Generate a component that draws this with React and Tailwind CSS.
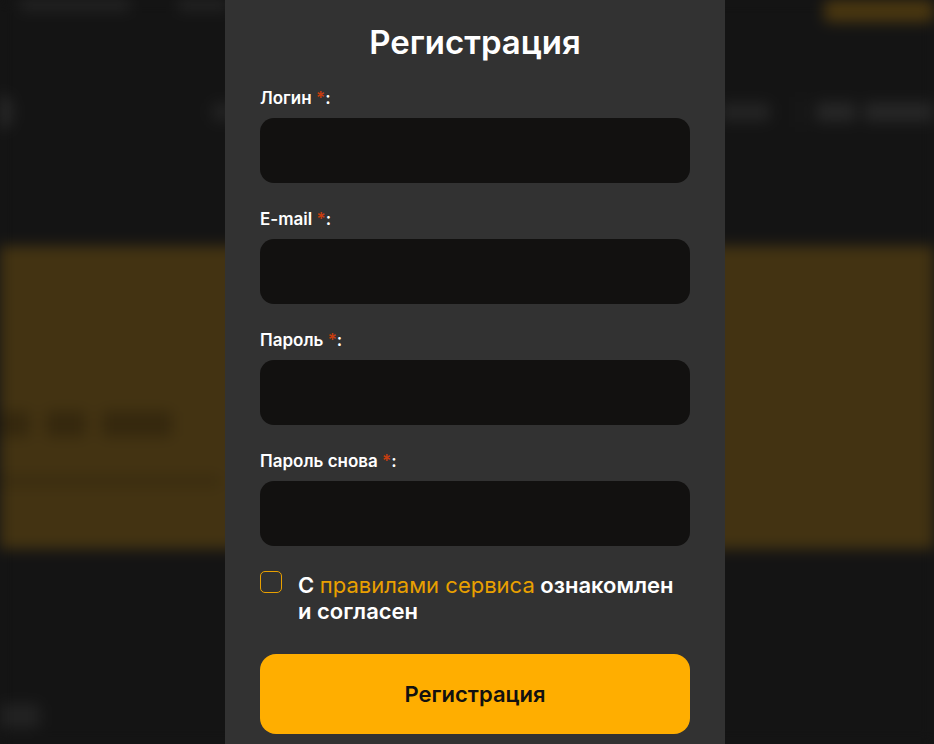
import { useState } from 'react';

const fields = [
  { id: 'login', label: 'Логин', type: 'text' },
  { id: 'email', label: 'E-mail', type: 'email' },
  { id: 'password', label: 'Пароль', type: 'password' },
  { id: 'password2', label: 'Пароль снова', type: 'password' },
];

// Page behind the modal, blurred
const BackgroundPage = () => (
  <div className="h-[744px] overflow-hidden bg-[#141414] blur-[7px]">
    {/* Top bar */}
    <div className="flex h-[22px] items-start gap-12 pl-5">
      <div className="mt-[-4px] h-[14px] w-[110px] rounded bg-[#262626]" />
      <div className="mt-[-4px] h-[14px] w-[50px] rounded bg-[#262626]" />
      <div className="ml-auto h-[22px] w-[110px] rounded-md bg-[#4a3710]" />
    </div>

    {/* Header nav */}
    <div className="mt-[70px] flex h-[40px] items-center">
      <div className="ml-[-14px] h-[36px] w-[26px] rounded-full bg-[#2a2a2a]" />
      <div className="ml-[200px] h-[18px] w-[40px] rounded bg-[#222]" />
      <div className="ml-auto h-[18px] w-[50px] rounded bg-[#242424]" />
      <div className="ml-[30px] h-[30px] w-[2px] bg-[#262626]" />
      <div className="ml-[14px] h-[20px] w-[40px] rounded bg-[#262626]" />
      <div className="ml-[8px] h-[20px] w-[70px] rounded bg-[#262626]" />
    </div>

    {/* Yellow banner */}
    <div className="mt-[114px] h-[303px] bg-[#433312] pt-[165px]">
      <div className="flex gap-4">
        <div className="h-[26px] w-[30px] rounded bg-[#35280e]" />
        <div className="h-[26px] w-[40px] rounded bg-[#35280e]" />
        <div className="h-[26px] w-[70px] rounded bg-[#35280e]" />
      </div>
      <div className="mt-[38px] h-[12px] w-[220px] rounded bg-[#3b2d10]" />
    </div>

    <div className="mt-[155px] h-[24px] w-[40px] rounded bg-[#222]" />
  </div>
);

const Field = ({ field, value, onChange }) => (
  <div className="flex flex-col">
    <label
      htmlFor={field.id}
      className="text-[17px] font-semibold leading-[20px] text-white"
    >
      {field.label} <span className="text-[#c63d0f]">*</span>:
    </label>
    <input
      id={field.id}
      type={field.type}
      value={value}
      onChange={e => onChange(field.id, e.target.value)}
      className="mt-[10px] h-[65px] w-full rounded-[14px] bg-[#121110] px-5 text-[16px] text-white outline-none"
    />
  </div>
);

export default function App() {
  const [values, setValues] = useState({
    login: '',
    email: '',
    password: '',
    password2: '',
  });
  const [agreed, setAgreed] = useState(false);

  const handleChange = (id, value) => {
    setValues(prev => ({ ...prev, [id]: value }));
  };

  return (
    <div
      className="relative h-[744px] overflow-hidden bg-[#141414]"
      style={{ fontFamily: 'Inter, "Noto Sans", sans-serif' }}
    >
      <BackgroundPage />

      {/* Modal */}
      <div className="absolute inset-0 flex justify-center pl-4">
        <div className="h-[780px] w-[500px] bg-[#323232] px-[35px] pt-[22px]">
          <h2 className="text-center text-[33px] font-semibold leading-[40px] text-white">
            Регистрация
          </h2>

          <form className="mt-[26px] flex flex-col gap-[26px]">
            {fields.map(field => (
              <Field
                key={field.id}
                field={field}
                value={values[field.id]}
                onChange={handleChange}
              />
            ))}

            <label className="flex cursor-pointer items-start gap-4">
              <input
                type="checkbox"
                checked={agreed}
                onChange={e => setAgreed(e.target.checked)}
                className="sr-only"
              />
              <span
                className={`mt-[-1px] flex h-[22px] w-[22px] shrink-0 items-center justify-center rounded-[5px] border border-[#e9a000] ${
                  agreed ? 'bg-[#ffae00]' : ''
                }`}
              >
                {agreed && (
                  <svg viewBox="0 0 16 16" className="h-3.5 w-3.5" fill="none">
                    <path
                      d="M3 8.5l3 3 7-7"
                      stroke="#121110"
                      strokeWidth="2"
                      strokeLinecap="round"
                      strokeLinejoin="round"
                    />
                  </svg>
                )}
              </span>
              <span className="max-w-[390px] text-[22px] font-semibold leading-[26px] text-white">
                С <a href="#" className="font-normal text-[#e9a000]">правилами сервиса</a>{' '}
                ознакомлен и согласен
              </span>
            </label>

            <button
              type="button"
              className="mt-[4px] h-[80px] w-full rounded-[16px] bg-[#ffae00] text-[22px] font-semibold text-[#121110]"
            >
              Регистрация
            </button>
          </form>
        </div>
      </div>
    </div>
  );
}
